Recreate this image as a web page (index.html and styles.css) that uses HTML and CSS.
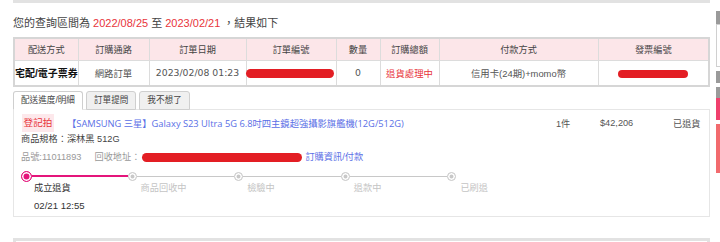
FILE: index.html
```
<!DOCTYPE html>
<html lang="zh-Hant">
<head>
    <meta charset="UTF-8">
    <title>訂單查詢</title>
    <link rel="stylesheet" href="styles.css">
</head>
<body>
    <div class="page">
        <div class="prev-box"></div>

        <p class="range">您的查詢區間為 <span class="red">2022/08/25</span> 至 <span class="red">2023/02/21</span> ，結果如下</p>

        <table class="order">
            <tr>
                <th class="c1">配送方式</th>
                <th class="c2">訂購通路</th>
                <th class="c3">訂單日期</th>
                <th class="c4">訂單編號</th>
                <th class="c5">數量</th>
                <th class="c6">訂購總額</th>
                <th class="c7">付款方式</th>
                <th class="c8">發票編號</th>
            </tr>
            <tr>
                <td class="ship">宅配/電子票券</td>
                <td>網路訂單</td>
                <td class="num">2023/02/08 01:23</td>
                <td><span class="redact redact-order"></span></td>
                <td class="num">0</td>
                <td class="red">退貨處理中</td>
                <td>信用卡(24期)+momo幣</td>
                <td><span class="redact redact-inv"></span></td>
            </tr>
        </table>

        <div class="tabs">
            <div class="tab active">配送進度/明細</div>
            <div class="tab">訂單提問</div>
            <div class="tab">我不想了</div>
        </div>

        <div class="detail">
            <div class="item-row">
                <span class="badge">登記拍</span>
                <a class="item-name" href="#">【SAMSUNG 三星】Galaxy S23 Ultra 5G 6.8吋四主鏡超強攝影旗艦機(12G/512G)</a>
                <span class="qty">1件</span>
                <span class="price">$42,206</span>
                <span class="state">已退貨</span>
            </div>
            <div class="spec">商品規格：深林黑 512G</div>
            <div class="meta">
                <span>品號:11011893</span>
                <span class="addr">回收地址：</span>
                <span class="redact redact-addr"></span>
                <a class="info" href="#">訂購資訊/付款</a>
            </div>

            <div class="track">
                <div class="step done">
                    <div class="node"><span class="dot"></span><span class="line"></span></div>
                    <div class="label">成立退貨</div>
                    <div class="time">02/21 12:55</div>
                </div>
                <div class="step">
                    <div class="node"><span class="dot"></span><span class="line"></span></div>
                    <div class="label">商品回收中</div>
                </div>
                <div class="step">
                    <div class="node"><span class="dot"></span><span class="line"></span></div>
                    <div class="label">檢驗中</div>
                </div>
                <div class="step">
                    <div class="node"><span class="dot"></span><span class="line"></span></div>
                    <div class="label">退款中</div>
                </div>
                <div class="step last">
                    <div class="node"><span class="dot"></span></div>
                    <div class="label">已刷退</div>
                </div>
            </div>
        </div>

        <div class="next-box"></div>
    </div>

    <div class="side">
        <div class="side-top"></div>
        <div class="side-panel"></div>
        <div class="side-gray"></div>
        <div class="side-gray tall"></div>
        <div class="side-pink"></div>
        <div class="side-salmon"></div>
    </div>
</body>
</html>
```

FILE: styles.css
```
* {
    box-sizing: border-box;
}

body {
    margin: 0;
    background: #fff;
    font-family: "Liberation Sans", "Noto Sans CJK TC", sans-serif;
    color: #444;
}

.page {
    width: 697px;
    margin-left: 13px;
}

.prev-box {
    height: 3px;
    background: #e2e2e2;
}

.range {
    margin: 12px 0 0;
    font-size: 11px;
    line-height: 16px;
    color: #444;
}

.red {
    color: #e8343b;
}

/* order table */
.order {
    margin-top: 6px;
    width: 100%;
    border-collapse: collapse;
    border: 2px solid #d6d6d6;
    font-size: 9.4px;
    table-layout: fixed;
}

.order th,
.order td {
    border: 1px solid #dcdcdc;
    text-align: center;
    padding: 0;
    white-space: nowrap;
}

.order th {
    height: 22px;
    background: #fce6e9;
    font-weight: normal;
    font-size: 9.2px;
    color: #444;
}

.order td {
    height: 26px;
    color: #555;
}

.c1 { width: 64px; }
.c2 { width: 71px; }
.c3 { width: 97px; }
.c4 { width: 90px; }
.c5 { width: 44px; }
.c6 { width: 59px; }
.c7 { width: 159px; }

.order td.ship {
    font-weight: bold;
    font-size: 10px;
    color: #111;
}

.order td.num {
    font-family: "DejaVu Sans", sans-serif;
    font-size: 9.3px;
}

.order td.red {
    color: #e8343b;
}

.redact {
    display: inline-block;
    background: #e31e24;
    border-radius: 5px;
    vertical-align: middle;
}

.redact-order {
    width: 88px;
    height: 9px;
    margin-left: -2px;
}

.redact-inv {
    width: 70px;
    height: 8px;
}

/* tabs */
.tabs {
    display: flex;
    gap: 3px;
    margin-top: 4px;
    font-size: 8.6px;
    position: relative;
    z-index: 1;
}

.tab {
    height: 19px;
    line-height: 17px;
    padding: 0 7px;
    border: 1px solid #cfcfcf;
    border-radius: 3px 3px 0 0;
    background: #f0f0f0;
    color: #444;
}

.tab.active {
    background: #fff;
    border-bottom-color: #fff;
}

/* detail box */
.detail {
    margin-top: -1px;
    border: 1px solid #e6e6e6;
    padding: 4px 7px 6px 7px;
    height: 108px;
    font-size: 9.2px;
}

.item-row {
    display: flex;
    align-items: center;
    height: 18px;
}

.badge {
    width: 32px;
    height: 18px;
    line-height: 18px;
    text-align: center;
    background: #fde8eb;
    color: #e8343b;
    font-size: 9.6px;
    margin-left: 1px;
}

.item-name {
    margin-left: 13px;
    color: #5a6fe6;
    text-decoration: none;
    font-family: "Open Sans", "Noto Sans CJK TC", sans-serif;
    font-size: 9.3px;
    width: 489px;
    white-space: nowrap;
}

.qty {
    width: 44px;
    color: #555;
}

.price {
    width: 73px;
    color: #555;
}

.state {
    color: #555;
}

.spec {
    line-height: 14px;
    color: #444;
}

.meta {
    display: flex;
    align-items: center;
    margin-top: 4px;
    line-height: 14px;
    color: #999;
}

.addr {
    margin-left: 13px;
}

.redact-addr {
    width: 160px;
    height: 9px;
    margin-left: 2px;
}

.info {
    color: #5a6fe6;
    text-decoration: none;
    margin-left: 3px;
}

/* return progress */
.track {
    display: flex;
    margin-top: 7px;
}

.step {
    width: 106.6px;
    flex-shrink: 0;
}

.node {
    display: flex;
    align-items: center;
    height: 10px;
}

.dot {
    width: 9px;
    height: 9px;
    border-radius: 50%;
    border: 1px solid #cfcfcf;
    background: #c8c8c8;
    box-shadow: inset 0 0 0 1.5px #fff;
    flex-shrink: 0;
}

.line {
    flex: 1;
    height: 1px;
    background: #c8c8c8;
}

.step.done .dot {
    width: 11px;
    height: 11px;
    border-color: #e4157b;
    background: #e4157b;
    box-shadow: inset 0 0 0 1.5px #fff;
}

.step.done .line {
    height: 2px;
    background: #e4157b;
}

.label {
    padding-left: 13px;
    line-height: 14px;
    color: #c4c4c4;
    font-size: 9.2px;
}

.step.done .label {
    color: #333;
}

.time {
    padding-left: 13px;
    margin-top: 4px;
    line-height: 14px;
    font-size: 9.6px;
    color: #333;
}

.next-box {
    margin-top: 21px;
    height: 6px;
    border: 3px solid #e2e2e2;
    border-bottom: none;
}

/* floating side bar */
.side {
    position: fixed;
    top: 11px;
    left: 716px;
    width: 12px;
}

.side-top {
    height: 13px;
    background: #9a9a9a;
}

.side-panel {
    height: 43px;
    border: 1px solid #d0d0d0;
    background: #fff;
}

.side-gray {
    height: 12px;
    margin-top: 4px;
    background: #9a9a9a;
}

.side-gray.tall {
    height: 11px;
    margin-top: 4px;
}

.side-pink {
    height: 22px;
    background: #f0406d;
}

.side-salmon {
    height: 49px;
    margin-top: 4px;
    background: #f26b6e;
}
```
